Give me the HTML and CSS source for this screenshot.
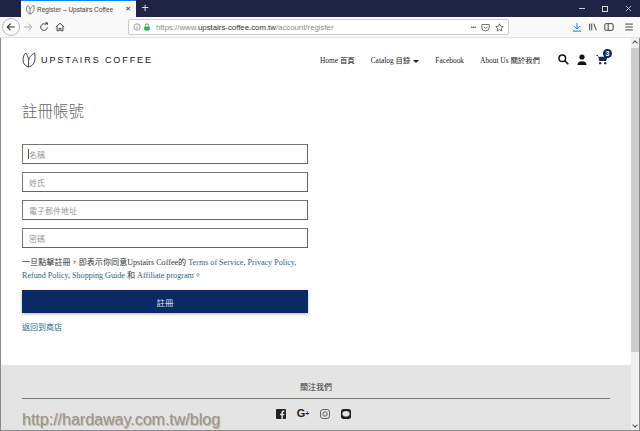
FILE: index.html
```html
<!DOCTYPE html>
<html lang="zh-Hant">
<head>
    <meta charset="UTF-8">
    <title>Register – Upstairs Coffee</title>
    <link rel="stylesheet" href="styles.css">
</head>
<body>
    <div class="window">
        <div class="titlebar">
            <div class="tab">
                <svg class="tab-icon" viewBox="0 0 12 12"><path d="M3 1.500C1.500 3 1 6 2.500 8.500c1 1.500 2 2 3 2.500M5.500 11V7c0-2.500 2-4.500 4-5.500C10.500 4 10 7 8.500 9 7.500 10 6.500 10.500 5.500 11M3 1.500c1 1 2 2.500 2.500 4"/></svg>
                <span class="tab-title">Register – Upstairs Coffee</span>
                <span class="tab-close">✕</span>
            </div>
            <span class="new-tab">+</span>
            <div class="window-controls">
                <span class="win-min"></span>
                <span class="win-max"></span>
                <svg class="win-close" viewBox="0 0 8 8"><path d="M1 1l6 6M7 1L1 7"/></svg>
            </div>
        </div>
        <div class="toolbar">
            <span class="back-btn">
                <svg viewBox="0 0 12 12"><path d="M10.500 6h-9M5.500 2l-4 4 4 4"/></svg>
            </span>
            <svg class="tool-icon forward" viewBox="0 0 12 12"><path d="M1.500 6h9M6.500 2l4 4-4 4"/></svg>
            <svg class="tool-icon reload" viewBox="0 0 12 12"><path d="M10 6.500A4 4 0 1 1 8.500 3"/><path class="solid" d="M7 .5l3.500 0v3.500z"/></svg>
            <svg class="tool-icon home" viewBox="0 0 12 12"><path d="M1 6l5-4.500L11 6M2.500 5v5.500h2.500V7.500h2v3h2.500V5"/></svg>
            <div class="urlbar">
                <svg class="info-icon" viewBox="0 0 10 10"><circle cx="5" cy="5" r="4"/><path d="M5 4.500v3M5 2.500v1"/></svg>
                <svg class="lock-icon" viewBox="0 0 10 10"><rect x="1.500" y="4.500" width="7" height="5" rx="1"/><path class="shackle" d="M3 4.500V3a2 2 0 0 1 4 0v1.500"/></svg>
                <span class="url">https://www.<b>upstairs-coffee.com.tw</b>/account/register</span>
                <span class="url-dots">•••</span>
                <svg class="url-icon" viewBox="0 0 12 12"><path d="M1.500 2h9a.5.5 0 0 1 .5.500V5.500a5 5 0 0 1-10 0V2.500a.5.5 0 0 1 .5-.5z"/><path d="M3.500 5l2.500 2 2.500-2"/></svg>
                <svg class="url-icon" viewBox="0 0 12 12"><path d="M6 1l1.500 3.300 3.500.4-2.600 2.400.7 3.500L6 8.800l-3.100 1.800.7-3.500L1 4.700l3.500-.4z"/></svg>
            </div>
            <div class="toolbar-right">
                <svg class="tool-icon download" viewBox="0 0 12 12"><path d="M6 1v7M2.500 5L6 8.500 9.500 5M1 11h10"/></svg>
                <svg class="tool-icon" viewBox="0 0 12 12"><path d="M2 2v8M4.500 2v8M7 2l3 8"/></svg>
                <svg class="tool-icon" viewBox="0 0 12 12"><rect x="1" y="2" width="10" height="8" rx="1.500"/><path d="M5 2v8"/></svg>
                <svg class="tool-icon menu" viewBox="0 0 12 12"><path d="M1.500 2.500h9M1.500 6h9M1.500 9.500h9"/></svg>
            </div>
        </div>
        <div class="viewport">
            <div class="page">
                <header class="site-header">
                    <a class="logo">
                        <svg viewBox="0 0 15 17"><path d="M4 1C1.500 3 .5 7 1.500 11c.8 2.700 2.700 4 5 5M7 16V10C7 6 10 3 13.500 1 14.500 6 14 10 12 13c-1.200 1.600-3 2.500-5 3M4 1c1.300 1.500 2.500 4 3 7"/></svg>
                        <span>UPSTAIRS COFFEE</span>
                    </a>
                    <nav class="nav">
                        <a>Home 首頁</a>
                        <a>Catalog 目錄<i class="caret"></i></a>
                        <a>Facebook</a>
                        <a>About Us 關於我們</a>
                    </nav>
                    <div class="header-icons">
                        <svg class="search-icon" viewBox="0 0 11 11"><circle cx="4.300" cy="4.300" r="3.300"/><path d="M6.800 6.800l3.500 3.500"/></svg>
                        <svg class="user-icon" viewBox="0 0 10 11"><circle cx="5" cy="3" r="2.600"/><path d="M0.500 11c0-2.800 2-3.800 4.500-3.800S9.500 8.200 9.500 11z"/></svg>
                        <span class="cart">
                            <svg viewBox="0 0 14 12"><path d="M0 1h2.500l1.500 6.500h7.500L13 3H3.500z"/><circle cx="5" cy="10" r="1.300"/><circle cx="10.500" cy="10" r="1.300"/></svg>
                            <span class="cart-count">3</span>
                        </span>
                    </div>
                </header>

                <main class="register">
                    <h1>註冊帳號</h1>
                    <form class="register-form">
                        <div class="focused-field">
                            <input type="text" placeholder="名稱">
                        </div>
                        <input type="text" placeholder="姓氏">
                        <input type="email" placeholder="電子郵件地址">
                        <input type="password" placeholder="密碼">
                        <p class="terms">一旦點擊註冊，即表示你同意Upstairs Coffee的 <a>Terms of Service</a>, <a>Privacy Policy</a>, <a>Refund Policy</a>, <a>Shopping Guide</a> 和 <a>Affiliate program</a>。</p>
                        <button type="button" class="submit-btn">註冊</button>
                    </form>
                    <a class="back-link">返回到商店</a>
                </main>

                <footer class="site-footer">
                    <h2>關注我們</h2>
                    <div class="social">
                        <svg viewBox="0 0 10 10"><path class="solid" fill-rule="evenodd" d="M1 0h8a1 1 0 0 1 1 1v8a1 1 0 0 1-1 1H6.900V6.200h1.300l.2-1.500H6.900v-1c0-.4.200-.7.700-.7h.8V1.700C8.100 1.600 7.800 1.600 7.300 1.600c-1.200 0-1.900.7-1.900 2v1.100H4.100v1.500h1.300V10H1a1 1 0 0 1-1-1V1a1 1 0 0 1 1-1z"/></svg>
                        <span class="gplus">G<small>+</small></span>
                        <svg class="insta" viewBox="0 0 10 10"><rect x=".5" y=".5" width="9" height="9" rx="2.500"/><circle cx="5" cy="5" r="2.200"/></svg>
                        <svg viewBox="0 0 10 10"><rect class="solid" width="10" height="10" rx="2.500"/><ellipse class="line-bubble" cx="5" cy="4.700" rx="3.600" ry="2.800"/></svg>
                    </div>
                </footer>
            </div>
            <div class="scrollbar">
                <span class="arrow up"></span>
                <span class="thumb"></span>
                <span class="arrow down"></span>
            </div>
        </div>
    </div>
    <div class="watermark">http://hardaway.com.tw/blog</div>
</body>
</html>
```

FILE: styles.css
```css
* {
    margin: 0;
    padding: 0;
    box-sizing: border-box;
}

html, body {
    height: 100%;
    overflow: hidden;
}

body {
    position: relative;
    font-family: "Liberation Serif", "Noto Sans CJK TC", serif;
    background-color: white;
}

svg {
    display: block;
    flex-shrink: 0;
    fill: none;
    stroke: #333;
}

svg .solid {
    fill: #222;
    stroke: none;
}

.window {
    display: flex;
    flex-direction: column;
    height: 100%;
}

/* title bar and tab */
.titlebar {
    display: flex;
    align-items: stretch;
    height: 17px;
    padding-left: 21px;
    background-color: #1f2344;
}

.tab {
    display: flex;
    align-items: center;
    width: 115px;
    padding-left: 4px;
    background-color: #f9f9fa;
    border-top: 1px solid #0a84ff;
}

.tab-icon {
    width: 11px;
    height: 11px;
    stroke: #555;
    stroke-width: .8;
}

.tab-title {
    margin-left: 1px;
    font-family: "Liberation Sans", "Noto Sans CJK TC", sans-serif;
    font-size: 6.500px;
    color: #444;
    white-space: nowrap;
}

.tab-close {
    margin-left: auto;
    margin-right: 5px;
    font-family: "DejaVu Sans", sans-serif;
    font-size: 7px;
    color: #333;
}

.new-tab {
    width: 18px;
    text-align: center;
    font-family: "Liberation Sans", sans-serif;
    font-size: 13px;
    line-height: 16px;
    color: #ddd;
}

.window-controls {
    display: flex;
    align-items: center;
    gap: 17px;
    margin-left: auto;
    padding-right: 8px;
}

.win-min {
    width: 6px;
    height: 1px;
    background-color: #c9c9d2;
}

.win-max {
    width: 6px;
    height: 6px;
    border: 1px solid #d6d6dc;
}

.win-close {
    width: 7px;
    height: 7px;
    stroke: #c9c9d2;
}

/* toolbar */
.toolbar {
    display: flex;
    align-items: center;
    height: 21px;
    padding-left: 2px;
    background-color: #f9f9fa;
    border-bottom: 1px solid #e4e4e6;
}

.back-btn {
    display: flex;
    align-items: center;
    justify-content: center;
    width: 18px;
    height: 18px;
    background-color: white;
    border: 1px solid #bbb;
    border-radius: 50%;
}

.back-btn svg {
    width: 10px;
    height: 10px;
    stroke-width: 1.300;
}

.tool-icon {
    width: 10px;
    height: 10px;
    stroke: #444;
    stroke-width: 1.200;
}

.forward {
    margin-left: 3px;
    stroke: #aaa;
}

.reload {
    margin-left: 6px;
}

.home {
    margin-left: 6px;
}

.urlbar {
    display: flex;
    align-items: center;
    width: 381px;
    height: 16px;
    margin-left: 63px;
    padding: 0 4px;
    background-color: white;
    border: 1px solid #ccc;
    border-radius: 2px;
}

.info-icon {
    width: 8px;
    height: 8px;
    stroke: #777;
    stroke-width: .9;
}

.lock-icon {
    width: 8px;
    height: 8px;
    margin-left: 2px;
    stroke: none;
    fill: #2fb344;
}

.lock-icon .shackle {
    fill: none;
    stroke: #2fb344;
    stroke-width: 1.200;
}

.url {
    margin-left: 5px;
    font-family: "Liberation Sans", sans-serif;
    font-size: 7.800px;
    color: #8a8a8a;
    white-space: nowrap;
}

.url b {
    font-weight: normal;
    color: #333;
}

.url-dots {
    margin-left: auto;
    font-family: "Liberation Sans", sans-serif;
    font-size: 5px;
    color: #444;
}

.url-icon {
    width: 9px;
    height: 9px;
    margin-left: 5px;
    stroke: #444;
}

.toolbar-right {
    display: flex;
    align-items: center;
    gap: 6px;
    margin-left: 63px;
}

.download {
    stroke: #0a84ff;
}

.menu {
    margin-left: 4px;
}

/* page */
.viewport {
    display: flex;
    flex: 1;
    min-height: 0;
    border-left: 1px solid #8a8a8a;
    border-right: 1px solid #8a8a8a;
    border-bottom: 1px solid #8a8a8a;
}

.page {
    flex: 1;
    display: flex;
    flex-direction: column;
    min-width: 0;
    overflow: hidden;
}

.site-header {
    display: flex;
    align-items: center;
    height: 43px;
    padding: 0 22px 0 21px;
    flex-shrink: 0;
}

.logo {
    display: flex;
    align-items: center;
    gap: 5px;
    font-family: "Liberation Sans", sans-serif;
    font-size: 9px;
    letter-spacing: 1.900px;
    color: #111;
}

.logo svg {
    width: 14px;
    height: 16px;
    stroke: #333;
    stroke-width: 1;
}

.nav {
    display: flex;
    align-items: baseline;
    gap: 16px;
    margin-left: auto;
    font-size: 7.400px;
    color: #222;
}

.caret {
    display: inline-block;
    margin-left: 3px;
    vertical-align: middle;
    border-top: 3px solid #222;
    border-left: 3px solid transparent;
    border-right: 3px solid transparent;
}

.header-icons {
    display: flex;
    align-items: center;
    gap: 8px;
    margin-left: 18px;
}

.search-icon {
    width: 11px;
    height: 11px;
    stroke: #111;
    stroke-width: 1.500;
}

.user-icon {
    width: 10px;
    height: 11px;
    fill: #111;
    stroke: none;
}

.cart {
    position: relative;
    display: block;
}

.cart svg {
    width: 14px;
    height: 11px;
    fill: #1c2c50;
    stroke: none;
}

.cart-count {
    position: absolute;
    top: -5px;
    left: 8px;
    width: 9px;
    height: 9px;
    border-radius: 50%;
    background-color: #0a2a66;
    color: white;
    font-family: "Liberation Sans", sans-serif;
    font-size: 7px;
    font-weight: bold;
    line-height: 9px;
    text-align: center;
}

.register {
    flex-shrink: 0;
    height: 284px;
    padding: 18px 21px 0;
}

.register h1 {
    font-family: "Noto Sans CJK TC", sans-serif;
    font-size: 15.500px;
    font-weight: 300;
    line-height: 22px;
    color: #666;
}

.register-form {
    display: flex;
    flex-direction: column;
    width: 286px;
    margin-top: 23px;
}

.register-form input {
    width: 100%;
    height: 20px;
    margin-bottom: 8px;
    padding: 0 6px;
    border: 1px solid #777;
    border-bottom-color: #666;
    border-right-color: #666;
    font-family: "Noto Sans CJK TC", sans-serif;
    font-size: 8px;
    outline: none;
}

.register-form input::placeholder {
    color: #999;
}

/* blinking text cursor caught by the screenshot */
.focused-field {
    position: relative;
    display: flex;
}

.focused-field::after {
    content: "";
    position: absolute;
    left: 6px;
    top: 5px;
    width: 1px;
    height: 10px;
    background-color: #555;
}

.terms {
    font-size: 8.100px;
    line-height: 13px;
    color: #333;
}

.terms a {
    color: #2c5f86;
}

.submit-btn {
    height: 23px;
    margin-top: 8px;
    background-color: #0a2a66;
    border: none;
    box-shadow: 0 1px 3px rgba(0, 0, 0, 0.3);
    color: #d8deea;
    font-family: "Noto Sans CJK TC", sans-serif;
    font-size: 8.500px;
}

.back-link {
    display: block;
    margin-top: 8px;
    font-family: "Noto Sans CJK TC", sans-serif;
    font-size: 8px;
    line-height: 12px;
    color: #2c6a8a;
}

.site-footer {
    flex: 1;
    padding: 16px 21px 0;
    background-color: #e4e4e4;
}

.site-footer h2 {
    padding-bottom: 5px;
    border-bottom: 1px solid #777;
    font-family: "Noto Sans CJK TC", sans-serif;
    font-size: 8px;
    font-weight: normal;
    line-height: 12px;
    text-align: center;
    color: #333;
}

.social {
    display: flex;
    align-items: center;
    justify-content: center;
    gap: 11px;
    margin-top: 9px;
    padding-right: 5px;
}

.social svg {
    width: 10px;
    height: 10px;
}

.gplus {
    font-family: "Liberation Sans", sans-serif;
    font-size: 11px;
    font-weight: bold;
    line-height: 10px;
    color: #222;
}

.gplus small {
    font-size: 7px;
    vertical-align: 1px;
}

.insta {
    stroke: #444;
    stroke-width: .8;
}

.line-bubble {
    fill: #e4e4e4;
    stroke: none;
}

.scrollbar {
    display: flex;
    flex-direction: column;
    align-items: center;
    width: 8px;
    background-color: #f0f0f0;
}

.arrow {
    flex-shrink: 0;
    width: 8px;
    height: 10px;
    position: relative;
}

.arrow::before {
    content: "";
    position: absolute;
    left: 2px;
    top: 3px;
    width: 3px;
    height: 3px;
    border-left: 1px solid #555;
    border-top: 1px solid #555;
    transform: rotate(45deg);
}

.arrow.down::before {
    transform: rotate(225deg);
}

.thumb {
    width: 8px;
    height: 304px;
    background-color: #cdcdcd;
}

.arrow.down {
    margin-top: auto;
}

.watermark {
    position: absolute;
    left: 22px;
    bottom: 2px;
    font-family: "Liberation Sans", sans-serif;
    font-size: 16px;
    line-height: 18px;
    color: #969696;
    text-shadow: 1px 1px 0 #c9b79a;
}
```
